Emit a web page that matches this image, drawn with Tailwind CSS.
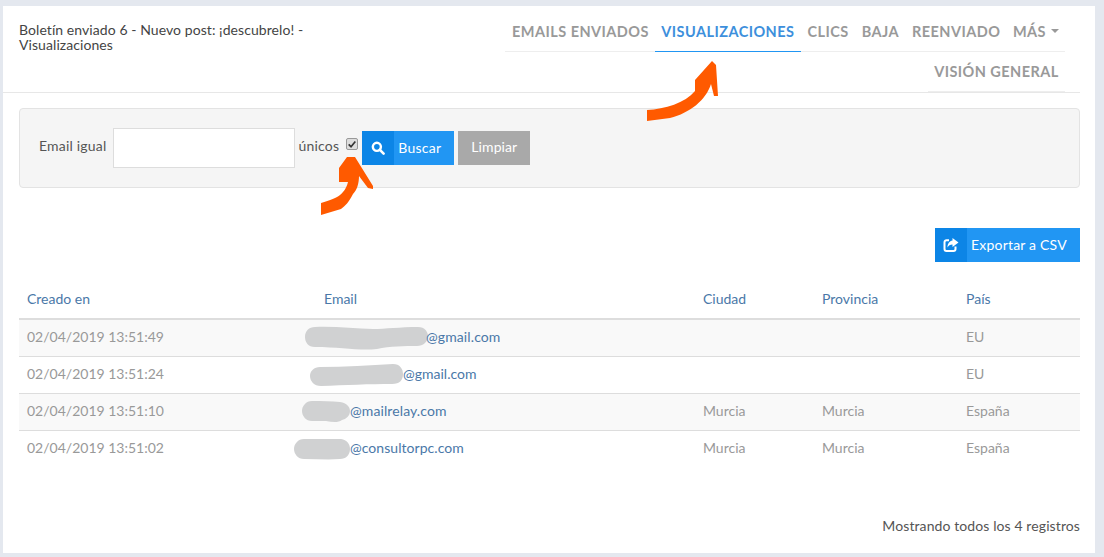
<!DOCTYPE html>
<html lang="es">
<head>
<meta charset="utf-8">
<script src="https://cdn.jsdelivr.net/npm/@tailwindcss/browser@4"></script>
</head>
<body class="m-0 bg-[#e4e8ef]">
<div class="relative w-[1104px] h-[557px] overflow-hidden bg-[#e4e8ef] pt-[6px] pl-[3px] font-['Lato','Liberation_Sans',sans-serif] text-[14px] text-[#555]">
  <div class="w-[1092px] h-[547px] bg-white">
    <header class="w-[1077px] h-[87px] border-b border-[#e7e7e7] flex justify-between">
      <div class="w-[306px] pl-[16px] pt-[16px] text-[14px] leading-[15px] tracking-[0.07px] text-[#444]">Boletín enviado 6 - Nuevo post: ¡descubrelo! - Visualizaciones</div>
      <nav class="w-[560px] mr-[15px] flex flex-col items-end font-bold text-[#999] text-[14.5px] tracking-[0.45px]">
        <ul class="w-full h-[46px] flex justify-end border-b border-[#eee]">
          <li class="px-[6px] pt-[15px]">EMAILS ENVIADOS</li>
          <li class="w-[146px] h-[46px] border-b border-[#2196f3] text-center pt-[15px] text-[#3d8fdc] whitespace-nowrap">VISUALIZACIONES</li>
          <li class="px-[6.5px] pt-[15px]">CLICS</li>
          <li class="px-[6.5px] pt-[15px]">BAJA</li>
          <li class="px-[6.5px] pt-[15px]">REENVIADO</li>
          <li class="pl-[6px] pr-[6px] pt-[15px] flex items-start gap-[5px]">MÁS <span class="mt-[8px] border-x-[4px] border-t-[4px] border-x-transparent border-t-[#999]"></span></li>
        </ul>
        <div class="w-[137px] h-[40px] border-b border-[#eee] text-center pt-[9px] whitespace-nowrap">VISIÓN GENERAL</div>
      </nav>
    </header>

    <form class="ml-[16px] mt-[15px] w-[1061px] h-[80px] bg-[#f5f5f5] border border-[#e3e3e3] rounded-[4px] flex items-start pl-[19px] text-[#555]">
      <label class="mt-[28px] leading-[18px] tracking-[0.2px]">Email igual</label>
      <input type="text" class="ml-[6px] mt-[19px] w-[182px] h-[40px] bg-white border border-[#ddd]">
      <label class="ml-[4px] mt-[28px] leading-[18px] tracking-[0.2px]">únicos</label>
      <span class="ml-[7px] mt-[29px] w-[12px] h-[12px] rounded-[2px] border border-[#999] bg-[#ddd] flex items-center justify-center">
        <svg viewBox="0 0 12 12" class="w-[10px] h-[10px]"><path d="M2 6.5 L4.8 9.2 L10 3" fill="none" stroke="#333" stroke-width="2"/></svg>
      </span>
      <button type="button" class="ml-[4px] mt-[22px] w-[92px] h-[34px] bg-[#2196f3] text-white flex items-stretch">
        <span class="w-[32px] bg-[#0c85e6] flex items-center justify-center">
          <svg viewBox="0 0 16 16" class="w-[14px] h-[14px]"><circle cx="6.7" cy="6.7" r="4.6" fill="none" stroke="#fff" stroke-width="2.8"/><path d="M10.2 10.2 L14.4 14.4" stroke="#fff" stroke-width="3" stroke-linecap="round"/></svg>
        </span>
        <span class="pl-[4px] pb-[1px] flex items-center tracking-[0.25px]">Buscar</span>
      </button>
      <button type="button" class="ml-[4px] mt-[22px] w-[72px] h-[34px] bg-[#a9a9a9] text-white pb-[3px] tracking-[0.1px]">Limpiar</button>
    </form>

    <div class="w-[1077px] mt-[40px] flex justify-end">
      <button type="button" class="w-[145px] h-[34px] bg-[#2196f3] text-white flex items-stretch">
        <span class="w-[32px] bg-[#0c85e6] flex items-center justify-center">
          <svg viewBox="0 0 16 16" class="w-[16px] h-[16px]"><path d="M6 3.2 H3.5 A2 2 0 0 0 1.5 5.2 V12 A2 2 0 0 0 3.5 14 H10.5 A2 2 0 0 0 12.5 12 V9.5" fill="none" stroke="#fff" stroke-width="2"/><path d="M9.5 1 L15.5 5.5 L9.5 10 V7.5 C7 7.5 5.5 8.5 4.5 10.5 C4.5 6.5 6.5 4 9.5 3.5 Z" fill="#fff"/></svg>
        </span>
        <span class="pl-[4px] pb-[1px] flex items-center tracking-[0.2px]">Exportar a CSV</span>
      </button>
    </div>

    <div class="ml-[16px] w-[1061px] mt-[19px]">
      <div class="grid grid-cols-[267px_409px_119px_144px_122px] h-[39px] border-b-2 border-[#ddd] text-[#4a78a8] items-start pt-[8px] leading-[20px]">
        <div class="pl-[8px]">Creado en</div>
        <div class="pl-[38px]">Email</div>
        <div class="pl-[8px]">Ciudad</div>
        <div class="pl-[8px]">Provincia</div>
        <div class="pl-[8px]">País</div>
      </div>

      <div class="grid grid-cols-[267px_409px_119px_144px_122px] h-[37px] border-b border-[#ddd] bg-[#f9f9f9] items-center text-[#999]">
        <div class="pl-[8px] pb-[3px]">02/04/2019 13:51:49</div>
        <div class="flex items-center text-[#4a78a8]">
          <svg viewBox="0 0 123 24" class="ml-[19px] w-[123px] h-[24px]"><path fill="#d0d1d2" d="M10 1 C30 0 50 3 68 3 C80 3 95 1 113 1 C120 1 123 6 123 10 C123 16 118 20 112 20 C100 20 85 20 72 23 C55 25 35 21 10 21 C3 21 0 16 0 11 C0 5 4 1 10 1 Z"/></svg>
          <span class="pb-[3px] -ml-[2px] tracking-[0.1px]">@gmail.com</span>
        </div>
        <div></div><div></div>
        <div class="pl-[8px] pb-[3px]">EU</div>
      </div>

      <div class="grid grid-cols-[267px_409px_119px_144px_122px] h-[37px] border-b border-[#ddd] items-center text-[#999]">
        <div class="pl-[8px] pb-[3px]">02/04/2019 13:51:24</div>
        <div class="flex items-center text-[#4a78a8]">
          <svg viewBox="0 0 93 23" class="ml-[24px] w-[93px] h-[23px]"><path fill="#d0d1d2" d="M10 3 C35 3 60 1 83 0 C90 0 93 5 93 10 C93 16 90 20 82 20 C60 20 35 21 11 22 C4 22 0 17 0 12 C0 7 4 3 10 3 Z"/></svg>
          <span class="pb-[3px]">@gmail.com</span>
        </div>
        <div></div><div></div>
        <div class="pl-[8px] pb-[3px]">EU</div>
      </div>

      <div class="grid grid-cols-[267px_409px_119px_144px_122px] h-[37px] border-b border-[#ddd] bg-[#f9f9f9] items-center text-[#999]">
        <div class="pl-[8px] pb-[3px]">02/04/2019 13:51:10</div>
        <div class="flex items-center text-[#4a78a8]">
          <svg viewBox="0 0 48 22" class="ml-[16px] w-[48px] h-[22px]"><path fill="#d0d1d2" d="M10 0 C20 0 30 0 38 1 C45 2 48 6 48 10 C48 15 44 18 40 19 C36 22 30 21 24 20 C18 20 14 20 10 20 C4 20 0 15 0 10 C0 5 4 0 10 0 Z"/></svg>
          <span class="pb-[3px] tracking-[0.1px]">@mailrelay.com</span>
        </div>
        <div class="pl-[8px] pb-[3px]">Murcia</div>
        <div class="pl-[8px] pb-[3px]">Murcia</div>
        <div class="pl-[8px] pb-[3px]">España</div>
      </div>

      <div class="grid grid-cols-[267px_409px_119px_144px_122px] h-[37px] items-center text-[#999]">
        <div class="pl-[8px] pb-[4px]">02/04/2019 13:51:02</div>
        <div class="flex items-center text-[#4a78a8]">
          <svg viewBox="0 0 56 21" class="ml-[8px] w-[56px] h-[21px]"><path fill="#d0d1d2" d="M10 0 C25 0 40 0 47 0 C53 1 56 5 56 10 C56 16 52 20 46 20 C35 21 22 20 10 20 C4 20 0 15 0 10 C0 5 4 0 10 0 Z"/></svg>
          <span class="pb-[4px] tracking-[0.05px]">@consultorpc.com</span>
        </div>
        <div class="pl-[8px] pb-[4px]">Murcia</div>
        <div class="pl-[8px] pb-[4px]">Murcia</div>
        <div class="pl-[8px] pb-[4px]">España</div>
      </div>

      <div class="mt-[48px] text-right leading-[20px] text-[#555] tracking-[0.1px]">Mostrando todos los 4 registros</div>
    </div>
  </div>

  <svg class="absolute left-0 top-0 w-[1104px] h-[557px] pointer-events-none" viewBox="0 0 1104 557">
    <path fill="#ff5a00" d="M647 110 C665 109 685 103 695 91 L695 80 L712 61 L716 65 L718 96 L714 96 L711 84 C706 100 690 113 670 118 L647 121 Z"/>
    <path fill="#ff5a00" d="M321 203 C330 200 337 198 340 195 C345 191 347 186 348 182 L339 182 L339 168 L347 157 L355 157 L373 186 L373 189 L368 188 L359 176 C359 183 357 190 353 194 C349 202 345 206 341 209 L321 215 Z"/>
  </svg>
</div>
</body>
</html>
